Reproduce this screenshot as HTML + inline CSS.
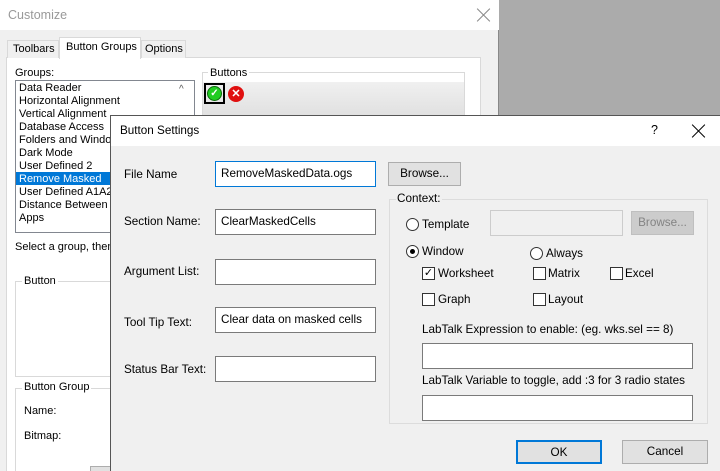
<!DOCTYPE html>
<html style="overflow:hidden;width:720px;height:471px"><head><style>
*{box-sizing:border-box;margin:0;padding:0}
body{width:720px;height:471px;overflow:hidden;background:#ababab;font-family:"Liberation Sans",sans-serif;font-size:12px;color:#000;position:relative}
.a{position:absolute}
.inp{position:absolute;background:#fff;border:1px solid #7a7a7a;padding:5px 5px;font-size:11.7px;white-space:nowrap;overflow:hidden}
.btn{position:absolute;background:#e1e1e1;border:1px solid #adadad;text-align:center;font-size:11.7px}
.rad{position:absolute;width:13px;height:13px;border:1px solid #333;border-radius:50%;background:#fff}
.chk{position:absolute;width:13px;height:13px;border:1px solid #333;background:#fff}
.lbl{position:absolute;font-size:11.7px;white-space:nowrap}
.x{position:absolute;width:14px;height:14px}
.x:before,.x:after{content:"";position:absolute;left:6px;top:-2px;width:1px;height:18px;background:currentColor;transform:rotate(45deg)}
.x:after{transform:rotate(-45deg)}
</style></head><body>
<div class="a" style="left:0;top:0;width:499px;height:471px;background:#f0f0f0;border-right:1px solid #888"></div>
<div class="a" style="left:0;top:0;width:499px;height:30px;background:#fff"></div>
<div class="lbl" style="left:8px;top:8px;color:#999;font-size:12.5px">Customize</div>
<div class="x" style="left:477px;top:8px;color:#888"></div>
<div class="a" style="left:6px;top:57px;width:475px;height:414px;background:#fff;border:1px solid #d9d9d9;border-bottom:none"></div>
<div class="a" style="left:7px;top:40px;width:52px;height:18px;background:#f0f0f0;border:1px solid #d9d9d9;border-bottom:none"></div>
<div class="lbl" style="left:13px;top:43px;font-size:11px">Toolbars</div>
<div class="a" style="left:59px;top:37px;width:82px;height:22px;background:#fff;border:1px solid #d9d9d9;border-bottom:none"></div>
<div class="lbl" style="left:66px;top:41px;font-size:11px">Button Groups</div>
<div class="a" style="left:141px;top:40px;width:45px;height:18px;background:#f0f0f0;border:1px solid #d9d9d9;border-bottom:none"></div>
<div class="lbl" style="left:145px;top:43px;font-size:11px">Options</div>
<div class="lbl" style="left:15px;top:67px;font-size:11px">Groups:</div>
<div class="a" style="left:15px;top:80px;width:180px;height:153px;background:#fff;border:1px solid #828790"></div>
<div class="a" style="left:16px;top:172px;width:96px;height:13px;background:#0078d7"></div>
<div class="a" style="left:19px;top:82px;font-size:11px;line-height:13px">Data Reader<br>Horizontal Alignment<br>Vertical Alignment<br>Database Access<br>Folders and Window<br>Dark Mode<br>User Defined 2<br><span style="color:#fff">Remove Masked</span><br>User Defined A1A2<br>Distance Between T<br>Apps</div>
<div class="a" style="left:179px;top:84px;font-size:10px;color:#555">^</div>
<div class="a" style="left:202px;top:72px;width:263px;height:50px;border:1px solid #d9d9d9"></div>
<div class="a" style="left:203px;top:82px;width:261px;height:35px;background:linear-gradient(#f0f0f0,#e0e0e0)"></div>
<div class="lbl" style="left:208px;top:67px;background:#fff;padding:0 2px;font-size:11px">Buttons</div>
<div class="a" style="left:204px;top:83px;width:21px;height:21px;border:2px solid #000"></div>
<div class="a" style="left:207px;top:86px;width:15px;height:15px;border-radius:50%;background:#22cc22;border:1px solid #0a6a0a;color:#fff;font-size:10px;line-height:13px;text-align:center;font-weight:bold">✓</div>
<div class="a" style="left:228px;top:86px;width:16px;height:16px;border-radius:50%;background:#e01010;color:#fff;font-size:11px;line-height:16px;text-align:center;font-weight:bold">✕</div>
<div class="lbl" style="left:15px;top:241px;font-size:11px">Select a group, then</div>
<div class="a" style="left:15px;top:281px;width:120px;height:96px;border:1px solid #d9d9d9"></div>
<div class="lbl" style="left:22px;top:275px;background:#fff;padding:0 2px;font-size:11px">Button</div>
<div class="a" style="left:15px;top:388px;width:120px;height:90px;border:1px solid #d9d9d9"></div>
<div class="lbl" style="left:22px;top:381px;background:#fff;padding:0 2px;font-size:11px">Button Group</div>
<div class="lbl" style="left:24px;top:405px;font-size:11px">Name:</div>
<div class="lbl" style="left:24px;top:430px;font-size:11px">Bitmap:</div>
<div class="a" style="left:90px;top:466px;width:30px;height:5px;background:#e1e1e1;border:1px solid #adadad;border-bottom:none"></div>
<div class="a" style="left:110px;top:115px;width:610px;height:356px;background:#f0f0f0;border-top:1px solid #555;border-left:1px solid #555"></div>
<div class="a" style="left:111px;top:116px;width:609px;height:30px;background:#fff"></div>
<div class="lbl" style="left:120px;top:124px">Button Settings</div>
<div class="lbl" style="left:651px;top:123px;font-size:12.5px">?</div>
<div class="x" style="left:692px;top:124px;color:#000"></div>
<div class="lbl" style="left:124px;top:168px">File Name</div>
<div class="inp" style="left:215px;top:161px;width:161px;height:26px;border-color:#0078d7">RemoveMaskedData.ogs</div>
<div class="lbl" style="left:124px;top:215px">Section Name:</div>
<div class="inp" style="left:215px;top:209px;width:161px;height:26px">ClearMaskedCells</div>
<div class="lbl" style="left:124px;top:265px">Argument List:</div>
<div class="inp" style="left:215px;top:259px;width:161px;height:26px"></div>
<div class="lbl" style="left:124px;top:316px">Tool Tip Text:</div>
<div class="inp" style="left:215px;top:307px;width:161px;height:26px">Clear data on masked cells</div>
<div class="lbl" style="left:124px;top:363px">Status Bar Text:</div>
<div class="inp" style="left:215px;top:356px;width:161px;height:26px"></div>
<div class="btn" style="left:388px;top:162px;width:73px;height:24px;line-height:22px">Browse...</div>
<div class="a" style="left:389px;top:199px;width:319px;height:225px;border:1px solid #dcdcdc"></div>
<div class="lbl" style="left:396px;top:192px;background:#f0f0f0;padding:0 1px">Context:</div>
<div class="rad" style="left:406px;top:218px"></div>
<div class="lbl" style="left:422px;top:218px">Template</div>
<div class="a" style="left:490px;top:210px;width:133px;height:26px;background:#f0f0f0;border:1px solid #ccc"></div>
<div class="btn" style="left:631px;top:211px;width:63px;height:24px;line-height:22px;background:#ccc;border-color:#bfbfbf;color:#838383">Browse...</div>
<div class="rad" style="left:406px;top:245px"></div>
<div class="a" style="left:410px;top:249px;width:5px;height:5px;border-radius:50%;background:#000"></div>
<div class="lbl" style="left:422px;top:245px">Window</div>
<div class="rad" style="left:530px;top:247px"></div>
<div class="lbl" style="left:546px;top:247px">Always</div>
<div class="chk" style="left:422px;top:267px;font-size:11px;line-height:11px;text-align:center">✓</div>
<div class="lbl" style="left:438px;top:267px">Worksheet</div>
<div class="chk" style="left:533px;top:267px"></div>
<div class="lbl" style="left:548px;top:267px">Matrix</div>
<div class="chk" style="left:610px;top:267px"></div>
<div class="lbl" style="left:625px;top:267px">Excel</div>
<div class="chk" style="left:422px;top:293px"></div>
<div class="lbl" style="left:438px;top:293px">Graph</div>
<div class="chk" style="left:533px;top:293px"></div>
<div class="lbl" style="left:548px;top:293px">Layout</div>
<div class="lbl" style="left:422px;top:323px">LabTalk Expression to enable: (eg. wks.sel == 8)</div>
<div class="inp" style="left:422px;top:343px;width:271px;height:26px"></div>
<div class="lbl" style="left:422px;top:374px">LabTalk Variable to toggle, add :3 for 3 radio states</div>
<div class="inp" style="left:422px;top:395px;width:271px;height:26px"></div>
<div class="btn" style="left:516px;top:440px;width:86px;height:24px;line-height:21px;border:2px solid #0078d7">OK</div>
<div class="btn" style="left:622px;top:440px;width:86px;height:24px;line-height:22px">Cancel</div>
</body></html>
